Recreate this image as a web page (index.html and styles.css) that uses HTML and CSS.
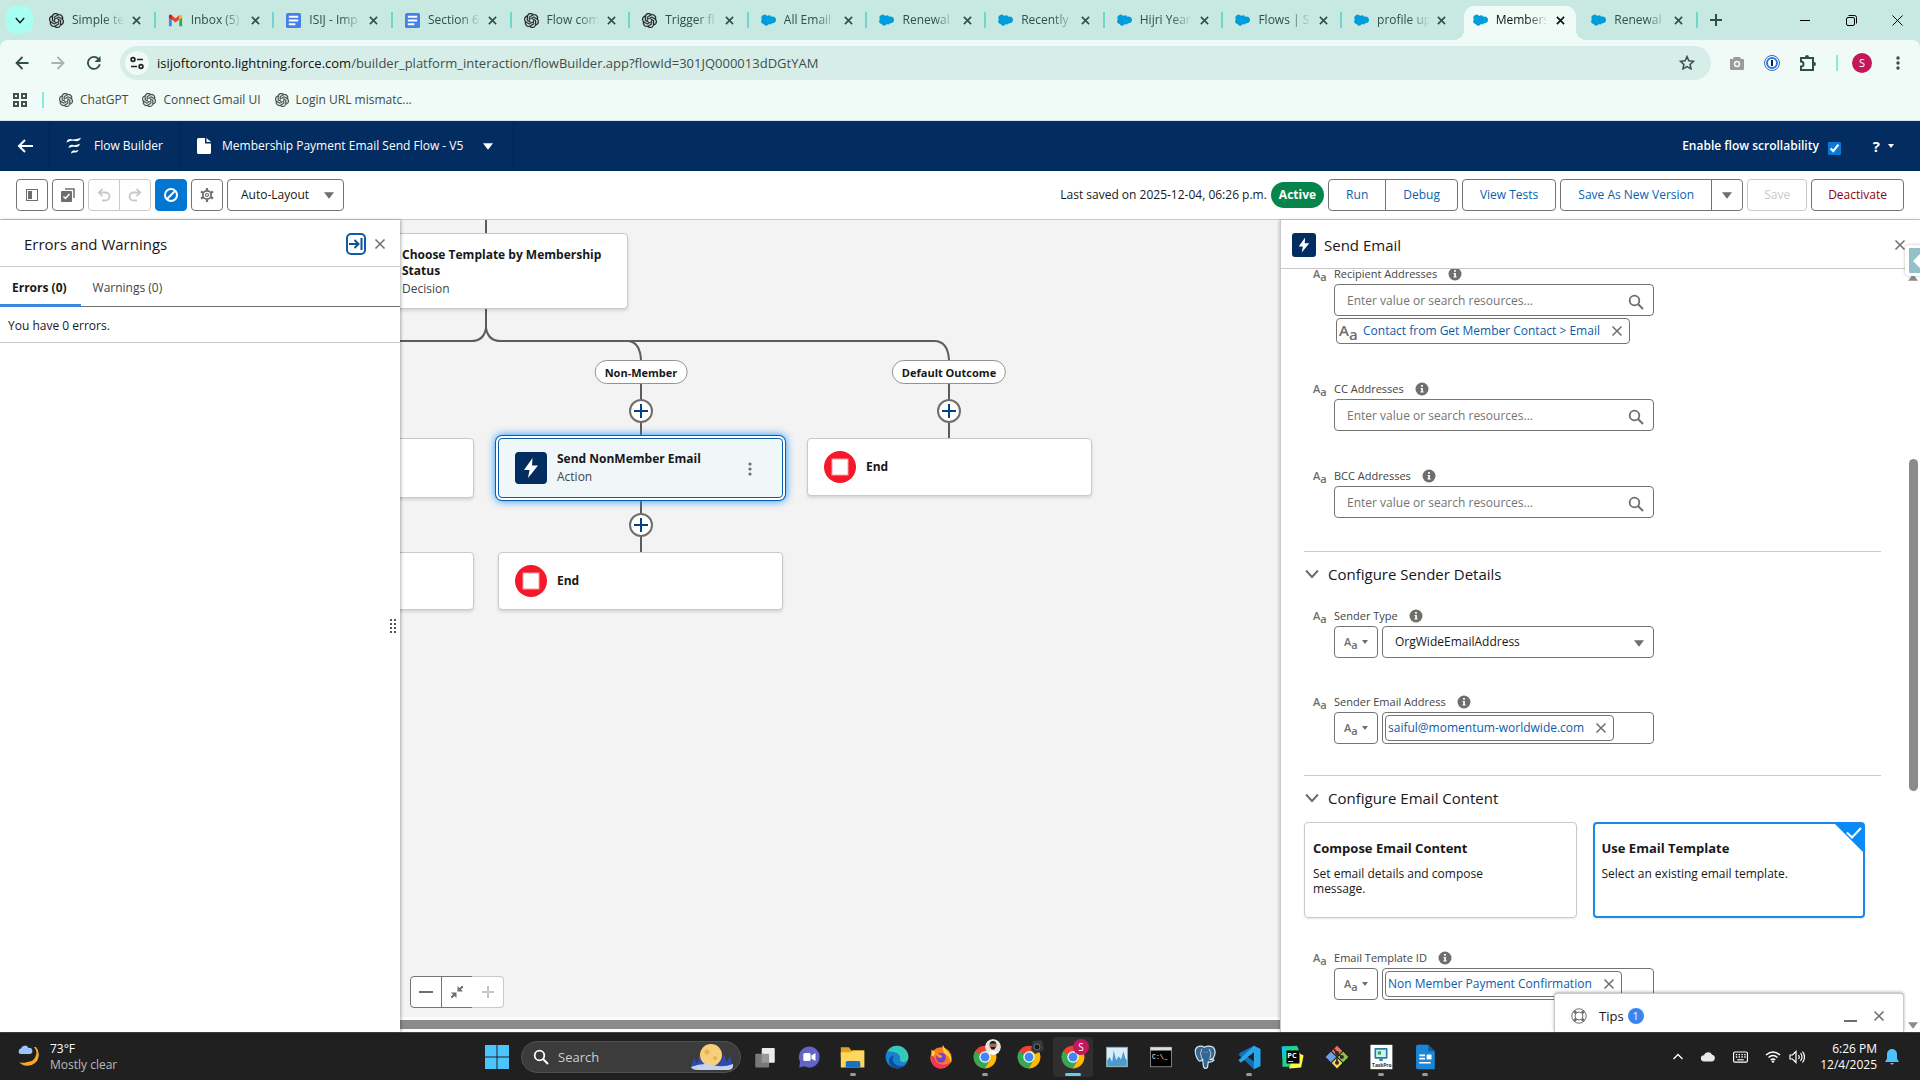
FILE: index.html
```html
<!DOCTYPE html>
<html lang="en">
<head>
  <meta charset="UTF-8">
  <meta name="viewport" content="width=device-width, initial-scale=1">
  <title>Membership Payment Email Send Flow - V5</title>
  <link rel="stylesheet" href="styles.css">
</head>
<body>

  <!-- ICON SPRITE -->
  <svg class="sprite" aria-hidden="true">
    <symbol id="i-gpt" viewBox="0 0 24 24"><path fill="currentColor" stroke="currentColor" stroke-width=".5" d="M22.2819 9.8211a5.9847 5.9847 0 0 0-.5157-4.9108 6.0462 6.0462 0 0 0-6.5098-2.9A6.0651 6.0651 0 0 0 4.9807 4.1818a5.9847 5.9847 0 0 0-3.9977 2.9 6.0462 6.0462 0 0 0 .7427 7.0966 5.98 5.98 0 0 0 .511 4.9107 6.051 6.051 0 0 0 6.5146 2.9001A5.9847 5.9847 0 0 0 13.2599 24a6.0557 6.0557 0 0 0 5.7718-4.2058 5.9894 5.9894 0 0 0 3.9977-2.9001 6.0557 6.0557 0 0 0-.7475-7.0729zm-9.022 12.6081a4.4755 4.4755 0 0 1-2.8764-1.0408l.1419-.0804 4.7783-2.7582a.7948.7948 0 0 0 .3927-.6813v-6.7369l2.02 1.1686a.071.071 0 0 1 .038.052v5.5826a4.504 4.504 0 0 1-4.4945 4.4944zm-9.6607-4.1254a4.4708 4.4708 0 0 1-.5346-3.0137l.142.0852 4.783 2.7582a.7712.7712 0 0 0 .7806 0l5.8428-3.3685v2.3324a.0804.0804 0 0 1-.0332.0615L9.74 19.9502a4.4992 4.4992 0 0 1-6.1408-1.6464zM2.3408 7.8956a4.485 4.485 0 0 1 2.3655-1.9728V11.6a.7664.7664 0 0 0 .3879.6765l5.8144 3.3543-2.0201 1.1685a.0757.0757 0 0 1-.071 0l-4.8303-2.7865A4.504 4.504 0 0 1 2.3408 7.872zm16.5963 3.8558L13.1038 8.364 15.1192 7.2a.0757.0757 0 0 1 .071 0l4.8303 2.7913a4.4944 4.4944 0 0 1-.6765 8.1042v-5.6772a.79.79 0 0 0-.407-.667zm2.0107-3.0231l-.142-.0852-4.7735-2.7818a.7759.7759 0 0 0-.7854 0L9.409 9.2297V6.8974a.0662.0662 0 0 1 .0284-.0615l4.8303-2.7866a4.4992 4.4992 0 0 1 6.6802 4.66zM8.3065 12.863l-2.02-1.1638a.0804.0804 0 0 1-.038-.0567V6.0742a4.4992 4.4992 0 0 1 7.3757-3.4537l-.142.0805L8.704 5.459a.7948.7948 0 0 0-.3927.6813zm1.0976-2.3654l2.602-1.4998 2.6069 1.4998v2.9994l-2.5974 1.4997-2.6067-1.4997Z"/></symbol>
    <symbol id="i-gmail" viewBox="0 0 16 16"><path fill="#4285f4" d="M1 4v10h3V7z"/><path fill="#34a853" d="M15 4v10h-3V7z"/><path fill="#ea4335" d="M1 4.500V3.500C1 2 2.700 1.500 4 2.500l4 3 4-3v4.500l-4 3-4-3z"/><path fill="#fbbc04" d="M12 2.500c1.300-1 3-.5 3 1v1.500l-3 2.300z"/><path fill="#c5221f" d="M4 2.500C2.700 1.500 1 2 1 3.500V5l3 2.300z"/></symbol>
    <symbol id="i-doc" viewBox="0 0 16 16"><rect width="16" height="16" rx="2" fill="#4580e9"/><path stroke="#fff" stroke-width="2" d="M3 4h10M3 8h10M3 12h7"/></symbol>
    <symbol id="i-cloud" viewBox="0 0 16 12"><path fill="#009ddc" d="M6.600 1.300A3 3 0 0 1 11 2a3.600 3.600 0 0 1 5 3.400 3.400 3.400 0 0 1-4.300 3.400 2.600 2.600 0 0 1-3.400 1 3 3 0 0 1-5.500-.2A2.700 2.700 0 0 1 1 4.900 3.100 3.100 0 0 1 6.600 1.300z"/></symbol>
    <symbol id="i-x" viewBox="0 0 12 12"><path fill="none" stroke="currentColor" stroke-width="1.500" d="M1.500 1.500l9 9M10.500 1.500l-9 9"/></symbol>
    <symbol id="i-x-bold" viewBox="0 0 10 10"><path fill="none" stroke="currentColor" stroke-width="1.800" d="M1 1l8 8M9 1L1 9"/></symbol>
    <symbol id="i-caret" viewBox="0 0 12 8"><path fill="currentColor" d="M0 0h12L6 8z"/></symbol>
    <symbol id="i-chevron" viewBox="0 0 14 10"><path fill="none" stroke="currentColor" stroke-width="2" d="M1 1.500l6 6.500 6-6.500"/></symbol>
    <symbol id="i-search" viewBox="0 0 16 16"><circle cx="6.500" cy="6.500" r="4.800" fill="none" stroke="currentColor" stroke-width="1.800"/><path stroke="currentColor" stroke-width="2" d="M10 10l5 5"/></symbol>
    <symbol id="i-info" viewBox="0 0 14 14"><circle cx="7" cy="7" r="6.500" fill="#706e6b"/><path fill="#fff" d="M6.100 3.100h1.800v1.700H6.100zM5.600 5.900h2.300v3.600h.8v1.100H5.400V9.500h.8V7h-.6z"/></symbol>
    <symbol id="i-bolt" viewBox="0 0 32 32"><rect width="32" height="32" rx="4" fill="#032d60"/><path fill="#fff" d="M17.500 6L9 18h5.500L13 26l10-12.500h-6z"/></symbol>
    <symbol id="i-stop" viewBox="0 0 32 32"><circle cx="16" cy="16" r="16" fill="#f5182b"/><rect x="8" y="8" width="16" height="16" fill="#fff" stroke="#f7a0a5"/></symbol>
    <symbol id="i-chrome" viewBox="0 0 32 32"><circle cx="16" cy="16" r="14" fill="#ea4335"/><path fill="#34a853" d="M3.900 9A14 14 0 0 0 16 30l6-10.500-6-3.500z"/><path fill="#fbbc04" d="M16 30A14 14 0 0 0 28.100 9H16l6 10.500z"/><circle cx="16" cy="16" r="7" fill="#fff"/><circle cx="16" cy="16" r="5.500" fill="#4285f4"/></symbol>
  </svg>

  <!-- BROWSER TABS -->
  <div class="tabstrip">
    <button class="tab-search" aria-label="Search tabs"><svg width="10" height="7"><use href="#i-chevron"/></svg></button>
    <div class="tabs">
      <div class="tab"><svg class="fav"><use href="#i-gpt"/></svg><span>Simple te</span><button aria-label="Close"><svg><use href="#i-x-bold"/></svg></button></div>
      <div class="tab"><svg class="fav"><use href="#i-gmail"/></svg><span>Inbox (5)</span><button aria-label="Close"><svg><use href="#i-x-bold"/></svg></button></div>
      <div class="tab"><svg class="fav"><use href="#i-doc"/></svg><span>ISIJ - Imp</span><button aria-label="Close"><svg><use href="#i-x-bold"/></svg></button></div>
      <div class="tab"><svg class="fav"><use href="#i-doc"/></svg><span>Section 6</span><button aria-label="Close"><svg><use href="#i-x-bold"/></svg></button></div>
      <div class="tab"><svg class="fav"><use href="#i-gpt"/></svg><span>Flow com</span><button aria-label="Close"><svg><use href="#i-x-bold"/></svg></button></div>
      <div class="tab"><svg class="fav"><use href="#i-gpt"/></svg><span>Trigger fl</span><button aria-label="Close"><svg><use href="#i-x-bold"/></svg></button></div>
      <div class="tab"><svg class="fav"><use href="#i-cloud"/></svg><span>All Email</span><button aria-label="Close"><svg><use href="#i-x-bold"/></svg></button></div>
      <div class="tab"><svg class="fav"><use href="#i-cloud"/></svg><span>Renewal</span><button aria-label="Close"><svg><use href="#i-x-bold"/></svg></button></div>
      <div class="tab"><svg class="fav"><use href="#i-cloud"/></svg><span>Recently</span><button aria-label="Close"><svg><use href="#i-x-bold"/></svg></button></div>
      <div class="tab"><svg class="fav"><use href="#i-cloud"/></svg><span>Hijri Year</span><button aria-label="Close"><svg><use href="#i-x-bold"/></svg></button></div>
      <div class="tab"><svg class="fav"><use href="#i-cloud"/></svg><span>Flows | S</span><button aria-label="Close"><svg><use href="#i-x-bold"/></svg></button></div>
      <div class="tab before-active"><svg class="fav"><use href="#i-cloud"/></svg><span>profile up</span><button aria-label="Close"><svg><use href="#i-x-bold"/></svg></button></div>
      <div class="tab active"><svg class="fav"><use href="#i-cloud"/></svg><span>Members</span><button aria-label="Close"><svg><use href="#i-x-bold"/></svg></button></div>
      <div class="tab"><svg class="fav"><use href="#i-cloud"/></svg><span>Renewal</span><button aria-label="Close"><svg><use href="#i-x-bold"/></svg></button></div>
    </div>
    <button class="new-tab" aria-label="New tab"><svg width="12" height="12" viewBox="0 0 12 12"><path stroke="currentColor" stroke-width="2" d="M6 0v12M0 6h12"/></svg></button>
    <div class="window-controls">
      <button aria-label="Minimize"><svg width="11" height="11"><path stroke="#000" d="M0 5.500h10"/></svg></button>
      <button aria-label="Restore"><svg width="11" height="11" fill="none" stroke="#000"><rect x=".5" y="2.500" width="8" height="8" rx="1.500"/><path d="M2.500 .5h6a2 2 0 0 1 2 2v6"/></svg></button>
      <button aria-label="Close window"><svg width="11" height="11" viewBox="0 0 11 11"><path stroke="#000" d="M.5 .5l10 10M10.500 .5l-10 10"/></svg></button>
    </div>
  </div>

  <!-- ADDRESS BAR -->
  <div class="omnibar">
    <button aria-label="Back"><svg width="14" height="14" viewBox="0 0 14 14"><path fill="none" stroke="currentColor" stroke-width="1.800" d="M13.500 7H2M7.500 1L1.500 7l6 6"/></svg></button>
    <button aria-label="Forward" class="dim"><svg width="14" height="14" viewBox="0 0 14 14"><path fill="none" stroke="currentColor" stroke-width="1.800" d="M.5 7H12M6.500 1l6 6-6 6"/></svg></button>
    <button aria-label="Reload"><svg width="14" height="14" viewBox="0 0 14 14"><path fill="none" stroke="currentColor" stroke-width="1.800" d="M12.800 8.200A6 6 0 1 1 11.500 3L13 4.500"/><path fill="currentColor" d="M13.500 0v6h-6z"/></svg></button>
    <div class="url">
      <span class="site-info"><svg width="14" height="14" viewBox="0 0 14 14"><g fill="none" stroke="#222" stroke-width="1.700"><circle cx="3" cy="3.500" r="1.900"/><path d="M7 3.500h6M1 10.500h6"/><circle cx="11" cy="10.500" r="1.900"/></g></svg></span>
      <a href="#"><b>isijoftoronto.lightning.force.com</b>/builder_platform_interaction/flowBuilder.app?flowId=301JQ000013dDGtYAM</a>
      <button aria-label="Bookmark"><svg width="16" height="16" viewBox="0 0 16 16"><path fill="none" stroke="currentColor" stroke-width="1.500" d="M8 1.600l1.900 4.200 4.600.5-3.400 3.100.9 4.500L8 11.600l-4 2.300.9-4.500L1.500 6.300l4.600-.5z"/></svg></button>
    </div>
    <div class="extensions">
      <button aria-label="Screenshot"><svg width="16" height="16" viewBox="0 0 16 16"><path fill="#9b9b9b" d="M1 4h3l1-2h6l1 2h2a1 1 0 0 1 1 1v9a1 1 0 0 1-1 1H2a1 1 0 0 1-1-1z"/><circle cx="8" cy="9" r="3.200" fill="#f0fbf7"/><circle cx="8" cy="9" r="1.700" fill="#9b9b9b"/></svg></button>
      <button aria-label="Password manager"><svg width="16" height="16" viewBox="0 0 16 16"><circle cx="8" cy="8" r="7.500" fill="#fff" stroke="#45619b"/><circle cx="8" cy="8" r="5" fill="#fff" stroke="#1a7cf0" stroke-width="2"/><path stroke="#123" stroke-width="2" d="M8 5v6"/></svg></button>
      <button aria-label="Extensions"><svg width="18" height="18" viewBox="0 0 18 18"><path fill="none" stroke="#2f4f49" stroke-width="2" d="M2 4h12v12H2v-3.500a2.500 2.500 0 0 0 0-5z"/><path fill="#2f4f49" d="M6 3a2 2 0 0 1 4 0zM15 8a2 2 0 0 1 0 4z"/></svg></button>
      <i class="bar"></i>
      <button class="avatar">S</button>
      <button aria-label="Menu"><svg width="4" height="16" fill="#2f4f49"><circle cx="2" cy="3" r="1.700"/><circle cx="2" cy="8" r="1.700"/><circle cx="2" cy="13" r="1.700"/></svg></button>
    </div>
  </div>

  <!-- BOOKMARKS -->
  <nav class="bookmarks">
    <svg width="14" height="14" fill="none" stroke="#444e4b" stroke-width="2"><rect x="1" y="1" width="4" height="4"/><rect x="9" y="1" width="4" height="4"/><rect x="1" y="9" width="4" height="4"/><rect x="9" y="9" width="4" height="4"/></svg>
    <i class="bar"></i>
    <a href="#"><svg class="fav"><use href="#i-gpt"/></svg>ChatGPT</a>
    <a href="#"><svg class="fav"><use href="#i-gpt"/></svg>Connect Gmail UI</a>
    <a href="#"><svg class="fav"><use href="#i-gpt"/></svg>Login URL mismatc...</a>
  </nav>

  <!-- FLOW BUILDER HEADER -->
  <header class="app-header">
    <a href="#" class="back" aria-label="Back"><svg width="16" height="14" viewBox="0 0 16 14"><path fill="none" stroke="#fff" stroke-width="2" d="M16 7H2M8 1L2 7l6 6"/></svg></a>
    <div class="brand"><svg width="16" height="18" viewBox="0 0 16 18"><g fill="#fff"><path d="M.5 5.500C1 2.500 3 1.500 5.500 2.200S10.500 2 15 .8C14 3.800 11.500 4.500 9 4S4 3.500 .5 5.500z"/><path d="M2.500 11c.5-3 2.500-3.500 4.500-3s4 0 7-1.200c-.8 2.700-2.500 3.500-4.500 3.100S5.500 9.500 2.500 11z"/><path d="M5 16.500c.3-2.500 1.800-3.200 3.300-2.900s2.500 0 4.200-.8c-.6 2.200-1.800 2.900-3.300 2.700S6.500 15.500 5 16.500z"/></g></svg>Flow Builder</div>
    <button class="flow-name"><svg width="14" height="16" viewBox="0 0 14 16"><path fill="#fff" d="M1.500 0H8v5.500h6v9a1.500 1.500 0 0 1-1.500 1.500h-11A1.500 1.500 0 0 1 0 14.500v-13A1.500 1.500 0 0 1 1.500 0zM9.500 0L14 4H9.500z"/></svg>Membership Payment Email Send Flow - V5<svg class="caret" width="10" height="7"><use href="#i-caret"/></svg></button>
    <div class="header-right">
      <label for="scrollability">Enable flow scrollability</label>
      <input type="checkbox" id="scrollability" checked>
      <button class="help">?<svg width="6" height="4"><use href="#i-caret"/></svg></button>
    </div>
  </header>

  <!-- TOOLBAR -->
  <div class="toolbar">
    <button class="btn square" aria-label="Toggle toolbox"><svg width="12" height="12"><rect x=".5" y=".5" width="11" height="11" fill="none" stroke="#706e6b"/><path fill="#706e6b" d="M2 2h4v8H2z"/></svg></button>
    <button class="btn square" aria-label="Select elements"><svg width="14" height="14" viewBox="0 0 14 14"><path fill="none" stroke="#706e6b" stroke-width="1.500" d="M4 1h9v9"/><rect y="3" width="11" height="11" rx="1" fill="#706e6b"/><path fill="none" stroke="#fff" stroke-width="1.500" d="M2.500 8.500l2 2 4-4.500"/></svg></button>
    <div class="group">
      <button class="btn square off" aria-label="Undo" disabled><svg width="14" height="14" viewBox="0 0 14 14"><path fill="none" stroke="currentColor" stroke-width="1.800" d="M2 4.500h6.500a4 4 0 0 1 0 8H5M5.500 .8L1.800 4.500l3.700 3.700"/></svg></button>
      <button class="btn square off" aria-label="Redo" disabled><svg width="14" height="14" viewBox="0 0 14 14"><path fill="none" stroke="currentColor" stroke-width="1.800" d="M12 4.500H5.500a4 4 0 0 0 0 8H9M8.500 .8l3.700 3.700-3.700 3.700"/></svg></button>
    </div>
    <button class="btn square brand-btn" aria-label="Errors"><svg width="14" height="14" viewBox="0 0 14 14"><g fill="none" stroke="#fff" stroke-width="2"><circle cx="7" cy="7" r="6"/><path d="M3 11l8-8"/></g></svg></button>
    <button class="btn square" aria-label="Settings"><svg width="14" height="14" viewBox="0 0 14 14"><g fill="none" stroke="#706e6b"><circle cx="7" cy="7" r="4.200" stroke-width="1.800"/><circle cx="7" cy="7" r="1.500" stroke-width="1.200"/><path stroke-width="2.200" d="M7 0v2.500M7 11.500V14M1 3.500l2.100 1.200M10.900 9.300l2.100 1.200M1 10.500l2.100-1.200M10.900 4.700L13 3.500"/></g></svg></button>
    <button class="btn layout">Auto-Layout<svg width="10" height="7"><use href="#i-caret"/></svg></button>
    <div class="actions">
      <span>Last saved on 2025-12-04, 06:26 p.m.</span>
      <span class="badge">Active</span>
      <div class="group"><button class="btn link">Run</button><button class="btn link">Debug</button></div>
      <button class="btn link">View Tests</button>
      <div class="group"><button class="btn link">Save As New Version</button><button class="btn more" aria-label="More save options"><svg width="10" height="7"><use href="#i-caret"/></svg></button></div>
      <button class="btn off" disabled>Save</button>
      <button class="btn danger">Deactivate</button>
    </div>
  </div>

  <main class="workspace">

    <!-- ERRORS PANEL -->
    <aside class="errors">
      <div class="errors-head">
        <h2>Errors and Warnings</h2>
        <button class="pin" aria-label="Move panel"><svg width="14" height="12" viewBox="0 0 14 12"><path fill="none" stroke="#0b5394" stroke-width="2" d="M0 6h9M5.500 2l4 4-4 4M12.500 0v12"/></svg></button>
        <button class="close" aria-label="Close panel"><svg><use href="#i-x"/></svg></button>
      </div>
      <div class="errors-tabs">
        <button class="current">Errors (0)</button>
        <button>Warnings (0)</button>
      </div>
      <p>You have 0 errors.</p>
      <svg class="grip" width="6" height="14" fill="#555"><path d="M0 0h2v2H0zM4 0h2v2H4zM0 4h2v2H0zM4 4h2v2H4zM0 8h2v2H0zM4 8h2v2H4zM0 12h2v2H0zM4 12h2v2H4z"/></svg>
    </aside>

    <!-- CANVAS -->
    <section class="canvas">
      <svg class="lines" width="700" height="400" fill="none" stroke="#5c5c5c" stroke-width="2">
        <path d="M86 0v14M86 88v20q-2 13-15 13H0M86 108q2 13 15 13h433q14 0 15 19M228 121q12 1 13 19M241 164v52M549 164v54M241 280v53"/>
      </svg>
      <div class="node decision">
        <div><h3>Choose Template by Membership Status</h3><p>Decision</p></div>
      </div>
      <span class="outcome non-member">Non-Member</span>
      <span class="outcome default">Default Outcome</span>
      <button class="add add-1" aria-label="Add element"></button>
      <button class="add add-2" aria-label="Add element"></button>
      <button class="add add-3" aria-label="Add element"></button>
      <div class="node cut cut-1"></div>
      <div class="node cut cut-2"></div>
      <div class="node selected">
        <svg width="32" height="32"><use href="#i-bolt"/></svg>
        <div><h3>Send NonMember Email</h3><p>Action</p></div>
        <svg class="kebab" width="4" height="14" fill="#706e6b"><circle cx="2" cy="2" r="1.600"/><circle cx="2" cy="7" r="1.600"/><circle cx="2" cy="12" r="1.600"/></svg>
      </div>
      <div class="node end end-1"><svg width="32" height="32"><use href="#i-stop"/></svg><h3>End</h3></div>
      <div class="node end end-2"><svg width="32" height="32"><use href="#i-stop"/></svg><h3>End</h3></div>
      <div class="zoom">
        <button class="btn square" aria-label="Zoom out"><svg width="14" height="14"><path stroke="#706e6b" stroke-width="2" d="M0 7h14"/></svg></button>
        <button class="btn square" aria-label="Zoom to fit"><svg width="12" height="12" viewBox="0 0 12 12"><path stroke="#706e6b" stroke-width="2" d="M0 12l3-3M12 0L9 3"/><path fill="#706e6b" d="M0 6.500h5.500V12zM6.500 0v5.500H12z"/></svg></button>
        <button class="btn square off" aria-label="Zoom in" disabled><svg width="12" height="12"><path stroke="currentColor" stroke-width="2" d="M0 6h12M6 0v12"/></svg></button>
      </div>
      <div class="h-scroll"></div>
    </section>

    <!-- SEND EMAIL PANEL -->
    <aside class="props">
      <div class="props-head">
        <svg width="24" height="24"><use href="#i-bolt"/></svg>
        <h2>Send Email</h2>
        <button class="close" aria-label="Close panel"><svg><use href="#i-x"/></svg></button>
      </div>
      <div class="props-body">
        <div class="fields recipients">
          <div class="field">
            <div class="field-label"><span class="aa">A<sub>a</sub></span><label for="to">Recipient Addresses</label><svg width="14" height="14"><use href="#i-info"/></svg></div>
            <div class="combo"><input id="to" type="text" placeholder="Enter value or search resources..."><svg width="16" height="16"><use href="#i-search"/></svg></div>
            <div class="chip below"><span class="aa big">A<sub>a</sub></span><a href="#">Contact from Get Member Contact &gt; Email</a><button aria-label="Remove"><svg><use href="#i-x"/></svg></button></div>
          </div>
          <div class="field">
            <div class="field-label"><span class="aa">A<sub>a</sub></span><label for="cc">CC Addresses</label><svg width="14" height="14"><use href="#i-info"/></svg></div>
            <div class="combo"><input id="cc" type="text" placeholder="Enter value or search resources..."><svg width="16" height="16"><use href="#i-search"/></svg></div>
          </div>
          <div class="field">
            <div class="field-label"><span class="aa">A<sub>a</sub></span><label for="bcc">BCC Addresses</label><svg width="14" height="14"><use href="#i-info"/></svg></div>
            <div class="combo"><input id="bcc" type="text" placeholder="Enter value or search resources..."><svg width="16" height="16"><use href="#i-search"/></svg></div>
          </div>
        </div>

        <h3 class="section-title"><svg width="14" height="10"><use href="#i-chevron"/></svg>Configure Sender Details</h3>
        <div class="fields sender">
          <div class="field">
            <div class="field-label"><span class="aa">A<sub>a</sub></span><label for="sender-type">Sender Type</label><svg width="14" height="14"><use href="#i-info"/></svg></div>
            <div class="control">
              <button class="btn type" aria-label="Value type"><span class="aa">A<sub>a</sub></span><svg width="6" height="4"><use href="#i-caret"/></svg></button>
              <div class="picker"><select id="sender-type"><option>OrgWideEmailAddress</option></select><svg width="10" height="7"><use href="#i-caret"/></svg></div>
            </div>
          </div>
          <div class="field">
            <div class="field-label"><span class="aa">A<sub>a</sub></span><label for="sender-email">Sender Email Address</label><svg width="14" height="14"><use href="#i-info"/></svg></div>
            <div class="control">
              <button class="btn type" aria-label="Value type"><span class="aa">A<sub>a</sub></span><svg width="6" height="4"><use href="#i-caret"/></svg></button>
              <div class="chip-box"><div class="chip"><a href="#">saiful@momentum-worldwide.com</a><button aria-label="Remove"><svg><use href="#i-x"/></svg></button></div><input id="sender-email" type="text"></div>
            </div>
          </div>
        </div>

        <h3 class="section-title"><svg width="14" height="10"><use href="#i-chevron"/></svg>Configure Email Content</h3>
        <div class="cards">
          <label class="card"><input type="radio" name="content"><b>Compose Email Content</b><span>Set email details and compose message.</span></label>
          <label class="card picked"><input type="radio" name="content" checked><b>Use Email Template</b><span>Select an existing email template.</span><svg class="corner" width="28" height="28" viewBox="0 0 28 28"><path fill="#0a8af5" d="M0 0h28v28z"/><path fill="none" stroke="#fff" stroke-width="2" d="M12 8.500l5 5L26 4"/></svg></label>
        </div>
        <div class="field">
          <div class="field-label"><span class="aa">A<sub>a</sub></span><label for="template">Email Template ID</label><svg width="14" height="14"><use href="#i-info"/></svg></div>
          <div class="control">
            <button class="btn type" aria-label="Value type"><span class="aa">A<sub>a</sub></span><svg width="6" height="4"><use href="#i-caret"/></svg></button>
            <div class="chip-box"><div class="chip"><a href="#">Non Member Payment Confirmation</a><button aria-label="Remove"><svg><use href="#i-x"/></svg></button></div><input id="template" type="text"></div>
          </div>
        </div>
      </div>
      <div class="v-scroll">
        <svg class="up" width="10" height="7"><use href="#i-caret"/></svg>
        <i></i>
        <svg class="down" width="10" height="7"><use href="#i-caret"/></svg>
      </div>
      <div class="side-tab"><svg width="8" height="14"><path fill="#fff" d="M8 0v14L1 7z"/></svg></div>
      <div class="tips">
        <svg width="16" height="16" viewBox="0 0 16 16" fill="none" stroke="#706e6b"><circle cx="8" cy="8" r="7.200"/><circle cx="8" cy="8" r="4"/><path stroke-width="3" d="M3.200 3.200l1.800 1.800M11 11l1.800 1.800M12.800 3.200L11 5M5 11l-1.800 1.800"/></svg>
        <span>Tips</span><em>1</em>
        <button aria-label="Minimize tips"><svg width="13" height="13"><path stroke="#706e6b" stroke-width="2" d="M0 12h13"/></svg></button>
        <button aria-label="Close tips"><svg width="12" height="12"><use href="#i-x"/></svg></button>
      </div>
    </aside>
  </main>

  <!-- TASKBAR -->
  <footer class="taskbar">
    <div class="weather">
      <svg width="26" height="26" viewBox="0 0 26 26"><path fill="#f9a825" d="M19 3a11 11 0 1 1-17 15 10 10 0 0 0 8 0A9 9 0 0 0 17 3z"/><path fill="#9cc4ff" d="M3 10a3 3 0 0 1 1-5.500 4 4 0 0 1 7.500-.5A3 3 0 0 1 13 10z"/></svg>
      <div>73°F<small>Mostly clear</small></div>
    </div>
    <div class="dock">
      <svg class="start" width="24" height="24" viewBox="0 0 24 24" fill="#4cc5ff"><path d="M0 0h11.500v11.500H0zM12.500 0H24v11.500H12.500zM0 12.500h11.500V24H0zM12.500 12.500H24V24H12.500z"/></svg>
      <div class="search">
        <svg width="16" height="16"><use href="#i-search"/></svg>
        <input type="text" placeholder="Search" aria-label="Search">
        <svg width="44" height="28" viewBox="0 0 44 28"><path fill="#2c4bb5" d="M1 24l3-9 3 6 3-10 4 9h16l4-9 3 8 3-6 3 11z"/><ellipse cx="21" cy="12" rx="11" ry="11" fill="#f8cf79"/><circle cx="17" cy="9" r="2.500" fill="#e8b055"/><circle cx="25" cy="15" r="2" fill="#e8b055"/><path fill="#c6d3ee" d="M1 24q12-5 22-2t20-1q1 5-4 6H8q-6 0-7-3z"/></svg>
      </div>
      <div class="app"><svg viewBox="0 0 32 32"><rect x="12" y="5" width="16" height="18" rx="1" fill="#ececec"/><rect x="4" y="12" width="17" height="17" rx="1" fill="#8a8a8a" opacity=".85"/></svg></div>
      <div class="app"><svg viewBox="0 0 32 32"><path fill="#6264c7" d="M16 3a13 13 0 1 1-6 24.500L4 29l1-7A13 13 0 0 1 16 3z"/><rect x="9" y="11" width="9" height="10" rx="2" fill="#fff"/><path fill="#fff" d="M19 14l5-3v10l-5-3z"/></svg></div>
      <div class="app run"><svg viewBox="0 0 32 32"><path fill="#e0a21c" d="M1 4h10l3 4h15v8H1z"/><path fill="#ffd75e" d="M1 10h12l3-2h14v21H1z"/><path fill="#1473c5" d="M7 29v-6q0-2 2-2h14q2 0 2 2v6z"/></svg></div>
      <div class="app"><svg viewBox="0 0 32 32"><circle cx="16" cy="16" r="14" fill="#1b7fd2"/><path fill="#35c9b6" d="M4 9A14 14 0 0 1 30 17q-1 6-8 5-3-1-2-4 0-6-7-8-5-1-9-1z"/><path fill="#0d4f9e" d="M12 14q-3 5 1 10 5 5 13 2-5 5-12 3.800Q6 28 6 20q1-5 6-6z"/></svg></div>
      <div class="app"><svg viewBox="0 0 32 32"><circle cx="16" cy="17" r="13" fill="#ff7a22"/><path fill="#ffd23b" d="M18 1q3 6 7 9 6 7 3 14-1-9-6-11-5-4-4-12zM4 7l5 3-4 8z"/><path fill="#f5345a" d="M4 14q-2 13 9 16 10 1 15-8-6 5-12 3-7-1-8-9z"/><circle cx="16" cy="17" r="6" fill="#7044c8"/><path fill="#ff9a2e" d="M9 11l8 3q2 3-4 3z"/></svg></div>
      <div class="app run"><svg viewBox="0 0 32 32"><use href="#i-chrome"/></svg><svg class="corner-pic" viewBox="0 0 16 16"><circle cx="8" cy="8" r="8" fill="#e8e4dd"/><circle cx="8" cy="6.500" r="3.500" fill="#9a6b4d"/><path fill="#1d1a1a" d="M4.500 6q0-4 3.500-4t3.500 4l-1-1.500h-5zM5.500 8h5l-1 2.500h-3z"/><path fill="#fff" d="M3 14q5-4 10 0l-5 2z"/></svg></div>
      <div class="app"><svg viewBox="0 0 32 32"><use href="#i-chrome"/></svg><svg class="corner-pic" viewBox="0 0 16 16"><path fill="#333a3d" d="M4 2l9-1 2 10-9 4-4-4z"/><circle cx="8" cy="8" r="3" fill="#15191b" stroke="#68737a"/></svg></div>
      <div class="app run current"><svg viewBox="0 0 32 32"><use href="#i-chrome"/></svg><span class="corner-pic">S</span></div>
      <div class="app"><svg viewBox="0 0 32 32"><rect x="3" y="4" width="26" height="24" fill="#d8edf8" stroke="#8aa"/><path fill="#4a9bcf" d="M4 27v-7l3-4 3 6 2-14 3 12 3-5 3 4 3-10 2 8 2 3v7z"/></svg></div>
      <div class="app"><svg viewBox="0 0 32 32"><rect x="3" y="4" width="26" height="24" fill="#000" stroke="#999"/><path fill="#ddd" d="M3 4h26v4H3z"/><text x="5" y="18" font-size="8" font-family="Liberation Mono" fill="#fff">C:\_</text></svg></div>
      <div class="app"><svg viewBox="0 0 32 32"><path fill="#336791" stroke="#dce6ee" stroke-width="1.500" d="M6 4q5-3 9 0 6-3 11 0 5 5 0 14l-3 1 4 1q-2 3-7 2l-1 7q-4 3-5-2l-1-8q-4 5-7-2Q2 8 6 4z"/><path fill="none" stroke="#dce6ee" d="M12 6q-3 6 0 12M21 6q4 5 1 12M15 10h1M18 10h1"/></svg></div>
      <div class="app run"><svg viewBox="0 0 32 32"><path fill="#0f72b8" d="M22 2l8 4v21l-8 4L3 13l3-3z"/><path fill="#2ba4ea" d="M22 2l8 4v21l-8 4V10L6 23l-3-3z"/><path fill="#202020" d="M22 10.500v11L14.500 16z"/></svg></div>
      <div class="app"><svg viewBox="0 0 32 32"><path fill="#20d38d" d="M3 3l18-1 4 10-10 16H3z"/><path fill="#fcf84a" d="M19 9l10 5-3 15-15 1z"/><path fill="#0bc7e8" d="M2 3h8L3 18z"/><rect x="8" y="8" width="16" height="16" fill="#000"/><text x="9" y="17" font-size="9" font-weight="700" font-family="Open Sans" fill="#fff">PC</text><path stroke="#fff" d="M10 21.500h6"/></svg></div>
      <div class="app"><svg viewBox="0 0 32 32"><path fill="#f26d5f" d="M16 2l6.500 6.500L16 15 9.500 8.500z"/><path fill="#6d9fea" d="M8.500 9.500L15 16l-6.500 6.500L2 16z"/><path fill="#8bc34a" d="M23.500 9.500L30 16l-6.500 6.500L17 16z"/><path fill="#fbd75b" d="M16 17l6.500 6.500L16 30l-6.500-6.500z"/><path fill="none" stroke="#2b2b2b" stroke-width="2" d="M12 6l4 5v14M16 11l6 5"/><g fill="#2b2b2b"><circle cx="16" cy="11" r="2.500"/><circle cx="22" cy="16" r="2.500"/><circle cx="16" cy="23" r="2.500"/></g></svg></div>
      <div class="app run"><svg viewBox="0 0 32 32"><rect x="3" y="1" width="27" height="30" fill="#fff"/><rect x="8" y="5" width="16" height="13" rx="1" fill="#1c7fa6"/><rect x="10" y="7" width="12" height="9" fill="#d6f0e9"/><path fill="#1c7fa6" d="M14 18h4v3h-4z"/><path fill="#2da56a" d="M12 9h4v4h-4z"/><text x="5" y="28" font-size="6" font-weight="700" font-family="Open Sans" fill="#234">TaskPro</text></svg></div>
      <div class="app run"><svg viewBox="0 0 32 32"><path fill="#1a86d8" d="M7 1h13l8 8v22H7q-2 0-2-2V3q0-2 2-2z"/><path fill="#0b5ba6" d="M20 1l8 8h-8z"/><path stroke="#fff" stroke-width="2" d="M9 14h7M9 18h7M9 23h14"/><path fill="#fff" d="M18 13h6v6h-6z"/></svg></div>
    </div>
    <div class="tray">
      <svg width="10" height="7" viewBox="0 0 10 7"><path fill="none" stroke="#fff" stroke-width="1.300" d="M.5 6L5 1.500 9.500 6"/></svg>
      <svg width="16" height="11" viewBox="0 0 16 12"><path fill="#e8e8e8" d="M4 11.500A3.500 3.500 0 0 1 3.500 4.500a5 5 0 0 1 9-.5 3.800 3.800 0 0 1-.5 7.500z"/></svg>
      <svg width="15" height="12" viewBox="0 0 16 12"><rect x=".6" y=".6" width="14.800" height="10.800" rx="1.500" fill="none" stroke="#fff" stroke-width="1.200"/><path stroke="#fff" stroke-width="1.500" stroke-dasharray="1.500 1.500" d="M3 3.500h10.500M3 6h10.500"/><path stroke="#fff" stroke-width="1.200" d="M4.500 9h7"/></svg>
      <svg class="wifi" width="16" height="13" viewBox="0 0 16 13"><path fill="none" stroke="#fff" stroke-width="1.400" d="M1 5q7-6 14 0M3.500 7.500q4.500-4 9 0M5.700 10q2.300-2 4.600 0"/><circle cx="8" cy="11.600" r="1.200" fill="#fff"/></svg>
      <svg width="16" height="14" viewBox="0 0 16 14"><path fill="none" stroke="#fff" stroke-width="1.200" d="M1 5h2.500L7 1.500v11L3.500 9H1zM9.500 5q1.500 2 0 4M11.500 3q3 4 0 8M13.500 1.500q4 5.500 0 11"/></svg>
      <div class="clock">6:26 PM<br>12/4/2025</div>
      <svg width="14" height="16" viewBox="0 0 14 16"><path fill="#4cc2ff" d="M7 0a5 5 0 0 1 5 5v4.500l2 3.500H0l2-3.500V5a5 5 0 0 1 5-5zM5 14h4q-2 3.500-4 0z"/></svg>
    </div>
  </footer>

</body>
</html>
```
FILE: styles.css
```css
/* General Reset and Styling */
* {
  margin: 0;
  padding: 0;
  box-sizing: border-box;
}
body {
  display: flex;
  flex-direction: column;
  height: 100vh;
  overflow: hidden;
  font-family: 'Segoe UI', 'Open Sans', sans-serif;
  font-size: 12px;
  line-height: 18px;
  color: #181818;
  background: #c8e9e1;
}
button, input, select {
  font: inherit;
  color: inherit;
  border: none;
  background: none;
}
button {
  display: inline-flex;
  align-items: center;
  justify-content: center;
}
a {
  color: inherit;
  text-decoration: none;
}
svg {
  flex: none;
  display: block;
}
.sprite {
  position: absolute;
  width: 0;
  height: 0;
}
.bar {
  width: 2px;
  height: 16px;
  background: #86ebdd;
}
.fav {
  width: 14px;
  height: 14px;
}

/* ===== BROWSER TABS ===== */
.tabstrip {
  display: flex;
  flex: none;
  height: 40px;
  background: #c8e9e1;
}
.tab-search {
  flex: none;
  width: 27px;
  height: 28px;
  margin: 6px 4px 0 6px;
  border-radius: 10px;
  background: #a8fff1;
}
.tabs {
  display: flex;
  flex: 1;
  min-width: 0;
}
.tab {
  position: relative;
  display: flex;
  align-items: center;
  flex: 1 1 0;
  min-width: 0;
  padding: 0 13px 0 12px;
  color: #2f4f49;
}
.tab .fav {
  width: 15px;
  height: 15px;
  color: #222;
}
.tab span {
  flex: 1;
  min-width: 0;
  margin-left: 8px;
  white-space: nowrap;
  -webkit-mask-image: linear-gradient(to right, #000 60%, transparent);
  mask-image: linear-gradient(to right, #000 60%, transparent);
}
.tab button {
  width: 12px;
  height: 12px;
  margin-left: 6px;
}
.tab button svg {
  width: 9px;
  height: 9px;
}
.tab::after {
  content: '';
  position: absolute;
  right: 0;
  top: 12px;
  width: 2px;
  height: 16px;
  background: #70d6c7;
}
.tab.before-active::after {
  display: none;
}
.tab.active {
  color: #111;
  z-index: 0;
}
.tab.active::before {
  content: '';
  position: absolute;
  z-index: -1;
  inset: 6px 3px 0;
  border-radius: 10px 10px 0 0;
  background: #f0fbf7;
}
.tab.active::after {
  top: auto;
  left: -7px;
  right: -7px;
  bottom: 0;
  width: auto;
  height: 10px;
  background:
    radial-gradient(circle at 0 0, transparent 10px, #f0fbf7 10px) left / 10px 10px no-repeat,
    radial-gradient(circle at 100% 0, transparent 10px, #f0fbf7 10px) right / 10px 10px no-repeat;
}
.new-tab {
  flex: none;
  width: 36px;
  color: #2f4f49;
}
.window-controls {
  display: flex;
  flex: none;
  width: 186px;
}
.window-controls button {
  flex: 1;
}
.window-controls button:first-child {
  margin-left: 48px;
}

/* ===== ADDRESS BAR ===== */
.omnibar {
  display: flex;
  align-items: center;
  flex: none;
  height: 46px;
  padding: 0 10px 0 4px;
  border-radius: 8px 8px 0 0;
  background: #f0fbf7;
  color: #2f4f49;
}
.omnibar > button {
  width: 36px;
  height: 36px;
}
.omnibar .dim {
  color: #a3b5b0;
}
.url {
  display: flex;
  align-items: center;
  flex: 1;
  height: 34px;
  margin-left: 8px;
  padding: 0 16px 0 5px;
  border-radius: 17px;
  background: #d7eee8;
  color: #3f4e4b;
  font-size: 13px;
}
.url b {
  color: #111;
  font-weight: 400;
}
.url button {
  margin-left: auto;
}
.site-info {
  display: flex;
  align-items: center;
  justify-content: center;
  width: 24px;
  height: 24px;
  margin-right: 8px;
  border-radius: 50%;
  background: #f0fbf7;
}
.extensions {
  display: flex;
  align-items: center;
  gap: 19px;
  margin-left: 18px;
  padding-right: 10px;
}
.extensions .avatar {
  width: 20px;
  height: 20px;
  margin: 0 5px 0 -5px;
  border-radius: 50%;
  background: #c2185b;
  color: #fff;
  font-size: 11px;
}

/* ===== BOOKMARKS ===== */
.bookmarks {
  display: flex;
  align-items: center;
  flex: none;
  height: 35px;
  padding: 0 0 7px 13px;
  border-bottom: 1px solid #cfe8ee;
  background: #f0fbf7;
  color: #3d4a47;
}
.bookmarks .bar {
  margin: 0 15px;
}
.bookmarks a {
  display: flex;
  align-items: center;
  gap: 7px;
  margin-right: 14px;
}

/* ===== FLOW BUILDER HEADER ===== */
.app-header {
  display: flex;
  flex: none;
  height: 50px;
  background: #032d60;
  color: #fff;
}
.app-header > * {
  display: flex;
  align-items: center;
}
.back {
  width: 49px;
  justify-content: center;
}
.brand {
  gap: 12px;
  padding: 0 16px;
  border: solid #04244b;
  border-width: 0 1px;
}
.flow-name {
  padding: 0 20px 0 17px;
  border-right: 1px solid #04244b;
}
.flow-name svg {
  margin-right: 11px;
}
.flow-name .caret {
  margin: 0 0 0 20px;
}
.header-right {
  margin-left: auto;
  padding-right: 26px;
}
.header-right label {
  font-weight: 600;
}
.header-right input {
  width: 13px;
  height: 13px;
  margin: 4px 32px 0 9px;
  accent-color: #0b78d8;
}
.help {
  gap: 8px;
  font-size: 15px;
  font-weight: 700;
}

/* ===== TOOLBAR ===== */
.toolbar {
  display: flex;
  align-items: center;
  flex: none;
  gap: 4px;
  height: 49px;
  padding: 0 16px;
  border-bottom: 1px solid #c9c9c9;
  background: #fff;
}
.btn {
  height: 32px;
  padding: 0 16px;
  border: 1px solid #747474;
  border-radius: 4px;
  background: #fff;
  white-space: nowrap;
}
.square {
  width: 32px;
  padding: 0;
}
.btn.off {
  color: #c9c9c9;
  border-color: #c9c9c9;
}
.brand-btn {
  background: #0176d3;
  border-color: #0176d3;
}
.layout {
  gap: 15px;
  padding: 0 9px 0 13px;
}
.layout svg,
.more svg {
  color: #706e6b;
}
.group {
  display: flex;
}
.group .btn + .btn {
  margin-left: -1px;
  border-radius: 0 4px 4px 0;
}
.group .btn:first-child {
  border-radius: 4px 0 0 4px;
}
.actions {
  display: flex;
  align-items: center;
  gap: 4px;
  margin-left: auto;
}
.badge {
  height: 26px;
  padding: 0 8px;
  border-radius: 13px;
  background: #05854b;
  color: #fff;
  font-weight: 700;
  line-height: 26px;
}
.link {
  padding: 0 17px;
  color: #0b62ae;
}
.btn.more {
  padding: 0 10px;
}
.danger {
  color: #8e030f;
}

/* ===== WORKSPACE ===== */
.workspace {
  display: flex;
  flex: 1;
  min-height: 0;
}
h2 {
  font-size: 15px;
  font-weight: 400;
  line-height: 20px;
}
.close {
  color: #706e6b;
}
.close svg {
  width: 12px;
  height: 12px;
}

/* ===== ERRORS PANEL ===== */
.errors {
  position: relative;
  z-index: 1;
  flex: none;
  width: 400px;
  background: #fff;
  box-shadow: 1px 0 3px rgba(0, 0, 0, 0.3);
}
.errors-head {
  display: flex;
  align-items: center;
  height: 47px;
  padding: 1px 14px 0 24px;
  border-bottom: 1px solid #c9c9c9;
}
.pin {
  width: 20px;
  height: 22px;
  margin: 0 8px 0 auto;
  border: 2px solid #0b5cab;
  border-radius: 5px;
}
.errors-tabs {
  display: flex;
  height: 40px;
  border-bottom: 1px solid #706e6b;
}
.errors-tabs button {
  height: 40px;
  padding: 2px 14px 0 12px;
  color: #444;
}
.errors-tabs .current {
  border-bottom: 3px solid #3b86e0;
  padding-top: 4px;
  color: #181818;
  font-weight: 700;
}
.errors p {
  padding: 10px 8px 7px;
  border-bottom: 1px solid #c9c9c9;
}
.grip {
  position: absolute;
  top: 50%;
  right: 4px;
  margin-top: -7px;
}

/* ===== CANVAS ===== */
.canvas {
  position: relative;
  flex: 1;
  overflow: hidden;
  background: #f3f3f3;
}
.lines {
  position: absolute;
  top: 0;
  left: 0;
}
.node {
  position: absolute;
  display: flex;
  align-items: center;
  gap: 10px;
  width: 285px;
  height: 58px;
  padding: 0 16px;
  border: 1px solid #c9c9c9;
  border-radius: 4px;
  background: #fff;
  box-shadow: 0 2px 3px rgba(0, 0, 0, 0.12);
}
.node h3 {
  font-size: 12px;
  font-weight: 700;
  line-height: 16px;
}
.node p {
  margin-top: 1px;
  color: #444;
}
.decision {
  top: 13px;
  left: -57px;
  height: 76px;
  padding: 3px 8px 0 58px;
}
.selected {
  top: 218px;
  left: 98px;
  height: 60px;
  background: #f0f7f9;
  border-color: #0b5cab;
  box-shadow: 0 0 0 2px #fff, 0 0 0 3px #0b5cab, 0 0 8px 3px #1b96ff;
}
.kebab {
  margin: 2px 14px 0 auto;
}
.end-1 {
  top: 218px;
  left: 407px;
}
.end-2 {
  top: 332px;
  left: 98px;
}
.cut {
  left: -211px;
}
.cut-1 {
  top: 218px;
  height: 60px;
}
.cut-2 {
  top: 332px;
}
.outcome {
  position: absolute;
  top: 140px;
  height: 24px;
  padding: 0 9px;
  border: 1px solid #939393;
  border-radius: 12px;
  background: #fff;
  font-size: 11px;
  font-weight: 700;
  line-height: 23px;
  transform: translateX(-50%);
}
.non-member {
  left: 241px;
}
.default {
  left: 549px;
}
.add {
  position: absolute;
  width: 24px;
  height: 24px;
  border: 2px solid #706e6b;
  border-radius: 50%;
  background:
    linear-gradient(#014486, #014486) center / 14px 2px no-repeat,
    linear-gradient(#014486, #014486) center / 2px 14px no-repeat,
    #fff;
}
.add-1 {
  top: 179px;
  left: 229px;
}
.add-2 {
  top: 179px;
  left: 537px;
}
.add-3 {
  top: 293px;
  left: 229px;
}
.zoom {
  position: absolute;
  left: 10px;
  bottom: 24px;
  display: flex;
}
.zoom .btn {
  border-radius: 4px 0 0 4px;
}
.zoom .btn + .btn {
  margin-left: -1px;
  border-radius: 0;
}
.zoom .btn:last-child {
  border-radius: 0 4px 4px 0;
  border-left: none;
}
.h-scroll {
  position: absolute;
  left: 0;
  right: 0;
  bottom: 0;
  height: 15px;
  border: solid #fcfcfc;
  border-width: 3px 0;
  background: #8b8b8b;
}

/* ===== SEND EMAIL PANEL ===== */
.props {
  position: relative;
  display: flex;
  flex-direction: column;
  flex: 0 0 33.3333%;
  border-left: 1px solid #c9c9c9;
  background: #fff;
  box-shadow: -1px 0 3px rgba(0, 0, 0, 0.2);
}
.props-head {
  display: flex;
  align-items: center;
  flex: none;
  gap: 8px;
  height: 49px;
  padding: 1px 14px 0 11px;
  border-bottom: 1px solid #c9c9c9;
}
.props-head .close {
  margin-left: auto;
}
.props-body {
  flex: 1;
  min-height: 0;
  overflow: hidden;
  padding: 0 39px 0 23px;
}
.fields {
  display: flex;
  flex-direction: column;
}
.recipients {
  gap: 35px;
  margin: -5px 0 33px;
}
.sender {
  gap: 34px;
  padding: 10px 0 31px;
}
.field {
  width: 350px;
  padding-left: 30px;
}
.field-label {
  display: flex;
  align-items: center;
  height: 20px;
  margin-left: -21px;
  color: #444;
  font-size: 11px;
}
.field-label svg {
  margin-left: 11px;
}
.aa {
  flex: none;
  width: 21px;
  color: #706e6b;
  font-size: 11px;
  font-weight: 600;
  line-height: 18px;
  text-align: left;
}
.aa sub {
  font-size: 11px;
  line-height: 1;
}
.aa.big {
  width: 24px;
  font-size: 15px;
  line-height: 20px;
}
.aa.big sub {
  font-size: 15px;
}
.combo,
.picker {
  position: relative;
  flex: 1;
}
.combo input,
.picker select,
.chip-box {
  width: 100%;
  height: 32px;
  padding: 0 12px;
  border: 1px solid #747474;
  border-radius: 4px;
  background: #fff;
}
.picker select {
  appearance: none;
}
input::placeholder {
  color: #747474;
  opacity: 1;
}
.combo svg,
.picker svg {
  position: absolute;
  top: 10px;
  right: 10px;
  color: #706e6b;
}
.picker svg {
  top: 14px;
}
.chip {
  display: flex;
  align-items: center;
  flex: none;
  width: max-content;
  height: 26px;
  padding: 0 6px 0 2px;
  border: 1px solid #747474;
  border-radius: 4px;
  color: #0b5cab;
}
.below {
  margin: 2px 0 0 2px;
}
.chip button {
  margin-left: 11px;
  color: #706e6b;
}
.chip svg {
  width: 12px;
  height: 12px;
}
.control {
  display: flex;
  gap: 4px;
}
.btn.type {
  flex: none;
  width: 44px;
  padding: 0;
}
.type .aa {
  width: 18px;
}
.type svg {
  color: #706e6b;
}
.chip-box {
  display: flex;
  align-items: center;
  flex: 1;
  min-width: 0;
  padding: 0 2px;
}
.chip-box input {
  flex: 1;
  min-width: 0;
}
.section-title {
  display: flex;
  align-items: center;
  gap: 9px;
  height: 45px;
  padding-left: 1px;
  border-top: 1px solid #c9c9c9;
  font-size: 15px;
  font-weight: 400;
}
.section-title svg {
  color: #706e6b;
}
.cards {
  display: grid;
  grid-template-columns: 1fr 1fr;
  gap: 16px;
  margin-bottom: 30px;
  padding: 2px 16px 0 0;
}
.card {
  position: relative;
  display: flex;
  flex-direction: column;
  gap: 9px;
  height: 96px;
  padding: 16px 64px 0 8px;
  border: 1px solid #c9c9c9;
  border-radius: 4px;
  line-height: 15px;
  box-shadow: 0 1px 2px rgba(0, 0, 0, 0.1);
}
.card input {
  position: absolute;
  opacity: 0;
}
.card b {
  font-size: 13px;
  line-height: 18px;
}
.card.picked {
  padding: 15px 24px 0 7px;
  border: 2px solid #1589ee;
}
.corner {
  position: absolute;
  top: 0;
  right: 0;
}
.v-scroll {
  position: absolute;
  top: 54px;
  right: 2px;
  bottom: 3px;
  display: flex;
  flex-direction: column;
  align-items: center;
  width: 10px;
  color: #8b8b8b;
}
.v-scroll i {
  width: 9px;
  height: 44%;
  border-radius: 5px;
  background: #8b8b8b;
}
.v-scroll .up {
  margin-bottom: 178px;
  transform: rotate(180deg);
}
.v-scroll .down {
  margin-top: auto;
}
.side-tab {
  position: absolute;
  top: 25px;
  right: 0;
  display: flex;
  align-items: center;
  justify-content: flex-end;
  width: 15px;
  height: 31px;
  border: solid #fff;
  border-width: 3px 0 3px 4px;
  border-radius: 4px 0 0 4px;
  background: #94c0c9;
  box-shadow: 0 0 3px rgba(0, 0, 0, 0.3);
}
.tips {
  position: absolute;
  right: 16px;
  bottom: 0;
  display: flex;
  align-items: center;
  width: 350px;
  height: 39px;
  padding: 5px 18px 0 16px;
  border: 1px solid #c9c9c9;
  border-bottom: none;
  border-radius: 4px 4px 0 0;
  background: #fff;
  box-shadow: 0 -1px 3px rgba(0, 0, 0, 0.3);
}
.tips span {
  margin: 0 4px 0 12px;
  font-size: 13px;
}
.tips em {
  width: 16px;
  height: 16px;
  margin-right: auto;
  border-radius: 50%;
  background: #3b86ee;
  color: #fff;
  font-size: 10px;
  font-style: normal;
  line-height: 16px;
  text-align: center;
}
.tips button {
  margin-left: 16px;
  color: #706e6b;
}

/* ===== TASKBAR ===== */
.taskbar {
  display: flex;
  align-items: center;
  flex: none;
  height: 48px;
  border-top: 1px solid #444;
  background: #202020;
  color: #fff;
  line-height: 16px;
}
.weather {
  display: flex;
  align-items: center;
  gap: 7px;
  width: 485px;
  padding-left: 17px;
}
.weather small {
  display: block;
  color: #bbb;
  font-size: 12px;
}
.dock {
  display: flex;
  align-items: center;
}
.search {
  display: flex;
  align-items: center;
  gap: 9px;
  width: 220px;
  height: 32px;
  margin: 0 2px 0 12px;
  padding: 0 6px 0 11px;
  border: 1px solid #505050;
  border-radius: 16px;
  background: #3c3c3c;
}
.search input {
  flex: 1;
  min-width: 0;
  font-size: 13px;
}
.search input::placeholder {
  color: #ccc;
}
.app {
  position: relative;
  display: flex;
  align-items: center;
  justify-content: center;
  width: 44px;
  height: 42px;
}
.app > svg {
  width: 26px;
  height: 26px;
}
.app.run::after {
  content: '';
  position: absolute;
  bottom: 2px;
  width: 6px;
  height: 3px;
  border-radius: 2px;
  background: #9a9a9a;
}
.app.current::before {
  content: '';
  position: absolute;
  inset: 1px 2px;
  border-radius: 4px;
  background: #2f2f2f;
}
.app.current > svg {
  position: relative;
}
.app.current::after {
  width: 16px;
  background: #60cdff;
}
.app .corner-pic {
  position: absolute;
  top: 3px;
  right: 6px;
  width: 16px;
  height: 16px;
  border-radius: 50%;
}
.app span.corner-pic {
  background: #c2185b;
  font-size: 10px;
  text-align: center;
}
.tray {
  display: flex;
  align-items: center;
  gap: 17px;
  margin-left: auto;
  padding-right: 21px;
}
.tray .wifi {
  margin-right: -9px;
}
.clock {
  margin: 0 -9px 0 -2px;
  text-align: right;
}
```
